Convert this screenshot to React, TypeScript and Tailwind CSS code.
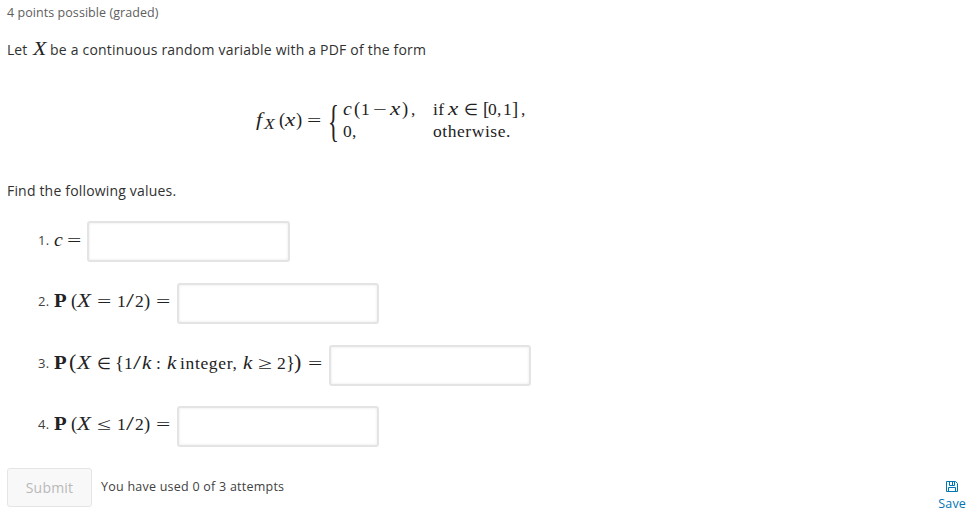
import type { ReactNode } from "react";

const serif = "font-['Liberation_Serif',serif]";

/** One symbol of a formula; the width class sets its advance. */
function T({ w, c = "", children }: { w: string; c?: string; children: ReactNode }) {
  return <span className={`inline-block shrink-0 whitespace-pre ${w} ${c}`}>{children}</span>;
}

function MathRow({ className = "", children }: { className?: string; children: ReactNode }) {
  return (
    <span className={`flex items-baseline text-[17.5px] leading-[20px] text-[#222] ${serif} ${className}`}>
      {children}
    </span>
  );
}

const eq = "origin-left scale-x-[1.45]";
const bigX = "italic text-[19px] origin-left scale-x-[1.2]";
const smallX = "italic text-[18.5px] origin-left scale-x-[1.25]";
const elem = "text-[15.5px]";
const paren = "text-[18.5px]";
const bold = "font-bold text-[18px] origin-left scale-x-[1.15]";
const slash = "text-[19px] origin-left scale-x-[1.5]";

interface AnswerProps {
  n: number;
  label: string;
  className?: string;
  line?: string;
  box?: string;
  children: ReactNode;
}

function Answer({ n, label, className = "", line = "h-[35px]", box = "w-[202px]", children }: AnswerProps) {
  return (
    <li className={`flex h-[41px] items-start ${className}`}>
      <div className={`flex items-center ${line}`}>
        <span className="w-[16px] text-[13px] leading-5 tracking-[0.3px] text-[#414141]">{n}.</span>
        <MathRow>{children}</MathRow>
      </div>
      <input
        aria-label={label}
        className={`h-[41px] rounded-[3px] border-2 border-[#e4e4e4] bg-white px-2 shadow-[inset_0_0_3px_#e8e8e8] outline-none ${box}`}
      />
    </li>
  );
}

export default function App() {
  return (
    <main className="flex h-[517px] w-[974px] flex-col overflow-hidden bg-white pl-[7px] font-['Open_Sans',sans-serif] text-[14px] text-[#313131]">
      <div className="mt-[3px] h-5 text-[12.5px] leading-5 tracking-[0.06px] text-[#5e5e5e]">4 points possible (graded)</div>
      <p className="mt-[16px] flex h-5 items-baseline leading-5">
        <span className="w-[26px]">Let</span>
        <span className={`w-[17px] origin-left scale-x-[1.15] text-[19px] italic leading-5 text-[#222] ${serif}`}>X</span>
        <span className="tracking-[0.2px]">be a continuous random variable with a PDF of the form</span>
      </p>

      <div className="mt-[38px] flex h-[48px] items-center pl-[249px]">
        <MathRow>
          <T w="w-[8px]" c="italic text-[19px] origin-left scale-x-[1.15]">f</T>
          <T w="w-[15px]" c="italic text-[14px] relative top-[3px] origin-left scale-x-[1.25]">X</T>
          <T w="w-[6px]" c={paren}>(</T>
          <T w="w-[11px]" c={smallX}>x</T>
          <T w="w-[11px]" c={paren}>)</T>
          <T w="w-[21px]" c={eq}>=</T>
        </MathRow>
        <span className={`-mt-[2px] flex h-[44px] w-[15px] origin-left scale-x-[1.2] scale-y-[2.35] items-center text-[19px] leading-[19px] text-[#222] ${serif}`}>{"{"}</span>
        <div className="-mt-[2px] flex flex-col">
          <MathRow>
            <T w="w-[11px]" c="italic text-[18px] origin-left scale-x-[1.1]">c</T>
            <T w="w-[7px]" c={paren}>(</T>
            <T w="w-[12px]">1</T>
            <T w="w-[17px]" c="origin-left scale-x-[1.4]">−</T>
            <T w="w-[12px]" c={smallX}>x</T>
            <T w="w-[9px]" c={paren}>)</T>
            <T w="w-[22px]">,</T>
            <T w="w-[15px]" c="tracking-[0.5px]">if</T>
            <T w="w-[16px]" c={smallX}>x</T>
            <T w="w-[19px]" c={elem}>∈</T>
            <T w="w-[5px]" c={paren}>[</T>
            <T w="w-[9px]">0</T>
            <T w="w-[6px]">,</T>
            <T w="w-[9px]">1</T>
            <T w="w-[9px]" c={paren}>]</T>
            <T w="w-[5px]">,</T>
          </MathRow>
          <MathRow className="mt-[1px]">
            <T w="w-[9px]">0</T>
            <T w="w-[81px]">,</T>
            <T w="w-[80px]" c="tracking-[0.55px]">otherwise.</T>
          </MathRow>
        </div>
      </div>

      <p className="mt-[36px] h-5 leading-5 tracking-[0.18px]">Find the following values.</p>

      <ol className="mt-[20px] flex flex-col pl-[31px]">
        <Answer n={1} label="c" line="h-[37px]" box="w-[203px]">
          <T w="w-[13px]" c="italic text-[18px] origin-left scale-x-[1.1]">c</T>
          <T w="w-[20px]" c={eq}>=</T>
        </Answer>
        <Answer n={2} label="P(X = 1/2)" className="mt-[21px]">
          <T w="w-[17px]" c={bold}>P</T>
          <T w="w-[6px]" c={paren}>(</T>
          <T w="w-[20px]" c={bigX}>X</T>
          <T w="w-[20px]" c={eq}>=</T>
          <T w="w-[9px]">1</T>
          <T w="w-[9px]" c={slash}>/</T>
          <T w="w-[9px]">2</T>
          <T w="w-[12px]" c={paren}>)</T>
          <T w="w-[21px]" c={eq}>=</T>
        </Answer>
        <Answer n={3} label="P(X ∈ {1/k : k integer, k ≥ 2})" className="mt-[21px]">
          <T w="w-[15px]" c={bold}>P</T>
          <T w="w-[8px]" c="text-[22px]">(</T>
          <T w="w-[20px]" c={bigX}>X</T>
          <T w="w-[18px]" c={elem}>∈</T>
          <T w="w-[9px]" c={paren}>{"{"}</T>
          <T w="w-[9px]">1</T>
          <T w="w-[9px]" c={slash}>/</T>
          <T w="w-[14px]" c="italic text-[19px] origin-left scale-x-[1.1]">k</T>
          <T w="w-[11px]">:</T>
          <T w="w-[13px]" c="italic text-[19px] origin-left scale-x-[1.1]">k</T>
          <T w="w-[63px]" c="tracking-[0.65px]">integer,</T>
          <T w="w-[15px]" c="italic text-[19px] origin-left scale-x-[1.1]">k</T>
          <T w="w-[19px]" c={eq}>≥</T>
          <T w="w-[9px]">2</T>
          <T w="w-[8px]" c={paren}>{"}"}</T>
          <T w="w-[14px]" c="text-[22px]">)</T>
          <T w="w-[21px]" c={eq}>=</T>
        </Answer>
        <Answer n={4} label="P(X ≤ 1/2)" className="mt-[20px]">
          <T w="w-[17px]" c={bold}>P</T>
          <T w="w-[6px]" c={paren}>(</T>
          <T w="w-[20px]" c={bigX}>X</T>
          <T w="w-[20px]" c={eq}>≤</T>
          <T w="w-[9px]">1</T>
          <T w="w-[9px]" c={slash}>/</T>
          <T w="w-[9px]">2</T>
          <T w="w-[12px]" c={paren}>)</T>
          <T w="w-[21px]" c={eq}>=</T>
        </Answer>
      </ol>

      <footer className="mt-[21px] flex h-[44px] items-start pr-[8px]">
        <button disabled className="h-[39px] w-[85px] rounded-[3px] border border-[#e5e5e5] bg-[#f8f8f8] text-[14px] tracking-[0.2px] text-[#b8b8b8]">
          Submit
        </button>
        <span className="ml-[9px] mt-[9px] text-[12.5px] leading-5 tracking-[0.24px] text-[#414141]">You have used 0 of 3 attempts</span>
        <button className="ml-auto mt-[13px] flex flex-col items-center text-[12.5px] leading-[20px] tracking-[0.15px] text-[#0075b4]">
          <svg width="12" height="11" viewBox="0 0 12 11" fill="none" stroke="currentColor">
            <path d="M.5 .5H9.5L11.5 2.5V10.5H.5Z" />
            <path d="M3.5 .5V4.5H8.5V.5M6.5 1V4M2.5 10.5V6.5H9.5V10.5" />
          </svg>
          <span className="mt-[2px]">Save</span>
        </button>
      </footer>
    </main>
  );
}
